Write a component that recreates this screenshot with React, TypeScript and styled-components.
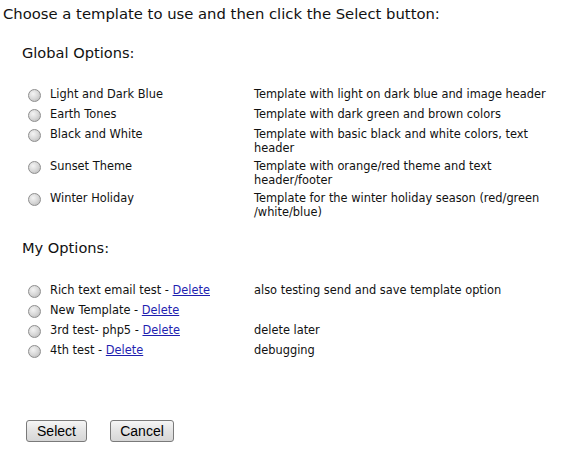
import React from "react";
import { styled, createGlobalStyle } from "styled-components";

const GlobalStyle = createGlobalStyle`
  html, body {
    margin: 0;
    padding: 0;
    background: #ffffff;
  }
  body {
    font-family: "DejaVu Sans", Verdana, sans-serif;
    color: #111111;
  }
`;

type Template = {
  id: string;
  name: string;
  description: React.ReactNode;
  deletable?: boolean;
};

const globalTemplates: Template[] = [
  { id: "g1", name: "Light and Dark Blue", description: "Template with light on dark blue and image header" },
  { id: "g2", name: "Earth Tones", description: "Template with dark green and brown colors" },
  { id: "g3", name: "Black and White", description: "Template with basic black and white colors, text header" },
  { id: "g4", name: "Sunset Theme", description: "Template with orange/red theme and text header/footer" },
  {
    id: "g5",
    name: "Winter Holiday",
    description: (
      <>
        Template for the winter holiday season (red/green<wbr />/white/blue)
      </>
    ),
  },
];

const myTemplates: Template[] = [
  { id: "m1", name: "Rich text email test", description: "also testing send and save template option", deletable: true },
  { id: "m2", name: "New Template", description: "", deletable: true },
  { id: "m3", name: "3rd test- php5", description: "delete later", deletable: true },
  { id: "m4", name: "4th test", description: "debugging", deletable: true },
];

const Page = styled.div`
  padding: 5px 0 0 3px;
`;

const Intro = styled.div`
  font-size: 14.8px;
  line-height: 18px;
`;

const SectionTitle = styled.div<{ $top: number; $bottom: number }>`
  margin: ${(p) => p.$top}px 0 ${(p) => p.$bottom}px 19px;
  font-size: 14.6px;
  line-height: 18px;
`;

const OptionList = styled.div`
  display: grid;
  grid-template-columns: 28px 204px 298px;
  padding-left: 19px;
  font-size: 11.4px;
  line-height: 14px;
`;

const OptionRow = styled.label`
  display: contents;
  cursor: pointer;
`;

const Cell = styled.div`
  padding: 3px 0 1px;
  min-height: 16px;
`;

const Radio = styled.input.attrs({ type: "radio" })`
  appearance: none;
  display: block;
  box-sizing: border-box;
  width: 13px;
  height: 13px;
  margin: 2px 0 0 6px;
  border: 1px solid #8e8e8e;
  border-radius: 50%;
  background: radial-gradient(circle at 38% 35%, #f4f4f4 0%, #d8d8d8 50%, #b4b4b4 100%);
`;

const DeleteLink = styled.a`
  color: #1f1fb0;
  text-decoration: underline;
`;

const Actions = styled.div`
  display: flex;
  gap: 23px;
  margin: 60px 0 0 23px;
`;

const Button = styled.button<{ $width: number }>`
  width: ${(p) => p.$width}px;
  height: 22px;
  padding: 0;
  font-family: "Liberation Sans", Arial, sans-serif;
  font-size: 14px;
  color: #000000;
  border: 1px solid #7a7a7a;
  border-radius: 3px;
  background: linear-gradient(#f6f6f6, #e3e3e3 50%, #d6d6d6);
`;

const TemplateRows = ({ items, group }: { items: Template[]; group: string }) => (
  <OptionList>
    {items.map((t) => (
      <OptionRow key={t.id}>
        <Cell>
          <Radio name={group} value={t.id} />
        </Cell>
        <Cell>
          {t.name}
          {t.deletable && (
            <>
              {" - "}
              <DeleteLink href="#" onClick={(e) => e.preventDefault()}>
                Delete
              </DeleteLink>
            </>
          )}
        </Cell>
        <Cell>{t.description}</Cell>
      </OptionRow>
    ))}
  </OptionList>
);

export default function App() {
  return (
    <Page>
      <GlobalStyle />
      <Intro>Choose a template to use and then click the Select button:</Intro>
      <SectionTitle $top={21} $bottom={22}>Global Options:</SectionTitle>
      <TemplateRows items={globalTemplates} group="template" />
      <SectionTitle $top={19} $bottom={23}>My Options:</SectionTitle>
      <TemplateRows items={myTemplates} group="template" />
      <Actions>
        <Button $width={61}>Select</Button>
        <Button $width={64}>Cancel</Button>
      </Actions>
    </Page>
  );
}
